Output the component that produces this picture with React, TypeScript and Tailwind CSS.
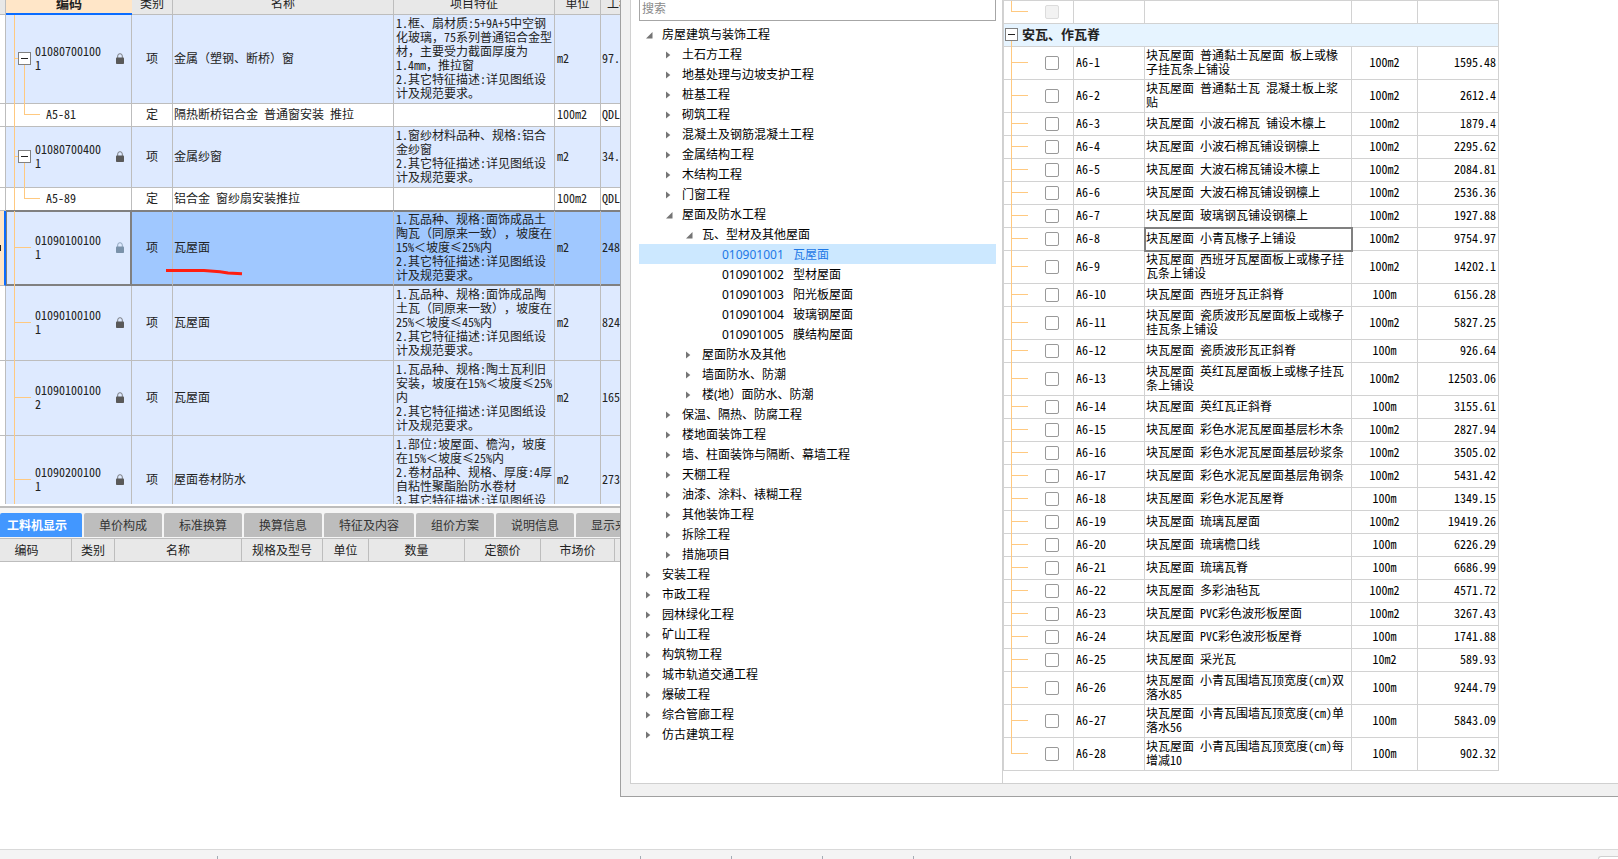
import { Fragment } from 'react';
import clsx from 'clsx';

type Bill = {
  code: string;
  kind: '项' | '定';
  name: string;
  spec: string;
  unit: string;
  qty: string;
  height: string;
  expandable?: boolean;
  selected?: boolean;
};

const bills: Bill[] = [
  {
    code: '01080700100\n1', kind: '项', name: '金属（塑钢、断桥）窗', unit: 'm2', qty: '97.', height: 'h-[89px]', expandable: true,
    spec: '1.框、扇材质:5+9A+5中空钢\n化玻璃，75系列普通铝合金型\n材，主要受力截面厚度为\n1.4mm，推拉窗\n2.其它特征描述:详见图纸设\n计及规范要求。',
  },
  { code: 'A5-81', kind: '定', name: '隔热断桥铝合金 普通窗安装 推拉', spec: '', unit: '100m2', qty: 'QDL', height: 'h-[23px]' },
  {
    code: '01080700400\n1', kind: '项', name: '金属纱窗', unit: 'm2', qty: '34.', height: 'h-[61px]', expandable: true,
    spec: '1.窗纱材料品种、规格:铝合\n金纱窗\n2.其它特征描述:详见图纸设\n计及规范要求。',
  },
  { code: 'A5-89', kind: '定', name: '铝合金 窗纱扇安装推拉', spec: '', unit: '100m2', qty: 'QDL', height: 'h-[23px]' },
  {
    code: '01090100100\n1', kind: '项', name: '瓦屋面', unit: 'm2', qty: '248', height: 'h-[75px]', selected: true,
    spec: '1.瓦品种、规格:面饰成品土\n陶瓦（同原来一致），坡度在\n15%＜坡度≤25%内\n2.其它特征描述:详见图纸设\n计及规范要求。',
  },
  {
    code: '01090100100\n1', kind: '项', name: '瓦屋面', unit: 'm2', qty: '824', height: 'h-[75px]',
    spec: '1.瓦品种、规格:面饰成品陶\n土瓦（同原来一致），坡度在\n25%＜坡度≤45%内\n2.其它特征描述:详见图纸设\n计及规范要求。',
  },
  {
    code: '01090100100\n2', kind: '项', name: '瓦屋面', unit: 'm2', qty: '165', height: 'h-[75px]',
    spec: '1.瓦品种、规格:陶土瓦利旧\n安装，坡度在15%＜坡度≤25%\n内\n2.其它特征描述:详见图纸设\n计及规范要求。',
  },
  {
    code: '01090200100\n1', kind: '项', name: '屋面卷材防水', unit: 'm2', qty: '273', height: 'h-[89px]',
    spec: '1.部位:坡屋面、檐沟，坡度\n在15%＜坡度≤25%内\n2.卷材品种、规格、厚度:4厚\n自粘性聚酯胎防水卷材\n3.其它特征描述:详见图纸设\n计及规范要求。',
  },
];

const tabs = ['工料机显示', '单价构成', '标准换算', '换算信息', '特征及内容', '组价方案', '说明信息', '显示来源'];

const detailColumns = [
  { label: '编码', width: 'w-[72px] pr-[18px]' },
  { label: '类别', width: 'w-[43px]' },
  { label: '名称', width: 'w-[127px]' },
  { label: '规格及型号', width: 'w-[81px]' },
  { label: '单位', width: 'w-[46px]' },
  { label: '数量', width: 'w-[96px]' },
  { label: '定额价', width: 'w-[76px]' },
  { label: '市场价', width: 'w-[74px]' },
  { label: '', width: 'w-[60px]' },
];

type Node = { level: number; label: string; code?: string; open?: boolean; active?: boolean };

const tree: Node[] = [
  { level: 0, label: '房屋建筑与装饰工程', open: true },
  { level: 1, label: '土石方工程' },
  { level: 1, label: '地基处理与边坡支护工程' },
  { level: 1, label: '桩基工程' },
  { level: 1, label: '砌筑工程' },
  { level: 1, label: '混凝土及钢筋混凝土工程' },
  { level: 1, label: '金属结构工程' },
  { level: 1, label: '木结构工程' },
  { level: 1, label: '门窗工程' },
  { level: 1, label: '屋面及防水工程', open: true },
  { level: 2, label: '瓦、型材及其他屋面', open: true },
  { level: 3, code: '010901001', label: '瓦屋面', active: true },
  { level: 3, code: '010901002', label: '型材屋面' },
  { level: 3, code: '010901003', label: '阳光板屋面' },
  { level: 3, code: '010901004', label: '玻璃钢屋面' },
  { level: 3, code: '010901005', label: '膜结构屋面' },
  { level: 2, label: '屋面防水及其他' },
  { level: 2, label: '墙面防水、防潮' },
  { level: 2, label: '楼(地）面防水、防潮' },
  { level: 1, label: '保温、隔热、防腐工程' },
  { level: 1, label: '楼地面装饰工程' },
  { level: 1, label: '墙、柱面装饰与隔断、幕墙工程' },
  { level: 1, label: '天棚工程' },
  { level: 1, label: '油漆、涂料、裱糊工程' },
  { level: 1, label: '其他装饰工程' },
  { level: 1, label: '拆除工程' },
  { level: 1, label: '措施项目' },
  { level: 0, label: '安装工程' },
  { level: 0, label: '市政工程' },
  { level: 0, label: '园林绿化工程' },
  { level: 0, label: '矿山工程' },
  { level: 0, label: '构筑物工程' },
  { level: 0, label: '城市轨道交通工程' },
  { level: 0, label: '爆破工程' },
  { level: 0, label: '综合管廊工程' },
  { level: 0, label: '仿古建筑工程' },
];

const indent = ['pl-[7px]', 'pl-[27px]', 'pl-[47px]', 'pl-[67px]'];

const quotas = [
  ['A6-1', '块瓦屋面 普通黏土瓦屋面 板上或椽\n子挂瓦条上铺设', '100m2', '1595.48'],
  ['A6-2', '块瓦屋面 普通黏土瓦 混凝土板上浆\n贴', '100m2', '2612.4'],
  ['A6-3', '块瓦屋面 小波石棉瓦 铺设木檩上', '100m2', '1879.4'],
  ['A6-4', '块瓦屋面 小波石棉瓦铺设钢檩上', '100m2', '2295.62'],
  ['A6-5', '块瓦屋面 大波石棉瓦铺设木檩上', '100m2', '2084.81'],
  ['A6-6', '块瓦屋面 大波石棉瓦铺设钢檩上', '100m2', '2536.36'],
  ['A6-7', '块瓦屋面 玻璃钢瓦铺设钢檩上', '100m2', '1927.88'],
  ['A6-8', '块瓦屋面 小青瓦椽子上铺设', '100m2', '9754.97'],
  ['A6-9', '块瓦屋面 西班牙瓦屋面板上或椽子挂\n瓦条上铺设', '100m2', '14202.1'],
  ['A6-10', '块瓦屋面 西班牙瓦正斜脊', '100m', '6156.28'],
  ['A6-11', '块瓦屋面 瓷质波形瓦屋面板上或椽子\n挂瓦条上铺设', '100m2', '5827.25'],
  ['A6-12', '块瓦屋面 瓷质波形瓦正斜脊', '100m', '926.64'],
  ['A6-13', '块瓦屋面 英红瓦屋面板上或椽子挂瓦\n条上铺设', '100m2', '12503.06'],
  ['A6-14', '块瓦屋面 英红瓦正斜脊', '100m', '3155.61'],
  ['A6-15', '块瓦屋面 彩色水泥瓦屋面基层杉木条', '100m2', '2827.94'],
  ['A6-16', '块瓦屋面 彩色水泥瓦屋面基层砂浆条', '100m2', '3505.02'],
  ['A6-17', '块瓦屋面 彩色水泥瓦屋面基层角钢条', '100m2', '5431.42'],
  ['A6-18', '块瓦屋面 彩色水泥瓦屋脊', '100m', '1349.15'],
  ['A6-19', '块瓦屋面 琉璃瓦屋面', '100m2', '19419.26'],
  ['A6-20', '块瓦屋面 琉璃檐口线', '100m', '6226.29'],
  ['A6-21', '块瓦屋面 琉璃瓦脊', '100m', '6686.99'],
  ['A6-22', '块瓦屋面 多彩油毡瓦', '100m2', '4571.72'],
  ['A6-23', '块瓦屋面 PVC彩色波形板屋面', '100m2', '3267.43'],
  ['A6-24', '块瓦屋面 PVC彩色波形板屋脊', '100m', '1741.88'],
  ['A6-25', '块瓦屋面 采光瓦', '10m2', '589.93'],
  ['A6-26', '块瓦屋面 小青瓦围墙瓦顶宽度(cm)双\n落水85', '100m', '9244.79'],
  ['A6-27', '块瓦屋面 小青瓦围墙瓦顶宽度(cm)单\n落水56', '100m', '5843.09'],
  ['A6-28', '块瓦屋面 小青瓦围墙瓦顶宽度(cm)每\n增减10', '100m', '902.32'],
];

// Half-width forms are on for the grids, so full-width punctuation has to opt out.
function GridText({ children }: { children: string }) {
  return children.split(/([，（）＜]+)/).map((part, idx) =>
    idx % 2 ? (
      <span key={idx} className="[font-feature-settings:normal]">{part}</span>
    ) : (
      <Fragment key={idx}>{part}</Fragment>
    ),
  );
}

function Lock({ className }: { className: string }) {
  return (
    <svg viewBox="0 0 8 11" className={clsx('h-[11px] w-2 shrink-0', className)} aria-hidden="true">
      <path d="M1.7 5V3a2.3 2.3 0 0 1 4.6 0v2" fill="none" stroke="currentColor" strokeWidth="1" opacity="0.75" />
      <rect x="0" y="4.6" width="8" height="6.4" rx="0.8" fill="currentColor" />
    </svg>
  );
}

function Collapse({ className }: { className?: string }) {
  return (
    <button type="button" aria-label="折叠" className={clsx('flex h-[13px] w-[13px] shrink-0 items-center justify-center border border-[#808080] bg-white', className)}>
      <span className="h-px w-[7px] bg-[#222]" />
    </button>
  );
}

function Arrow({ open }: { open?: boolean }) {
  return (
    <svg viewBox="0 0 16 8" className="h-2 w-4 shrink-0" fill="#757575" aria-hidden="true">
      {open ? <path d="M6.5 1v6.5H0z" /> : <path d="M0 0.5v7L4.3 4z" />}
    </svg>
  );
}

function BillRow({ bill }: { bill: Bill }) {
  const item = bill.kind === '项';
  const cell = clsx('border-b p-0 pb-0.5', bill.selected ? 'border-b-[#808080]' : 'border-b-[#bdbdbd]');
  const plain = clsx(cell, 'border-r border-r-[#bdbdbd]', bill.selected && 'shadow-[inset_0_1px_#808080,inset_0_-1px_#808080,0_-1px_#808080]');
  return (
    <tr className={clsx(bill.height, bill.selected ? 'bg-[#a0c8ff]' : item ? 'bg-[#deeaff]' : 'bg-white')}>
      <td className={clsx('border-b border-b-[#bdbdbd] p-0', bill.selected ? 'border-r-2 border-r-[#0a6cff] bg-[#ffe6c8]' : 'border-r border-r-[#bdbdbd] bg-white')}>
        {bill.selected && <span className="block h-1.5 w-px bg-[#222]" />}
      </td>
      <td
        className={clsx(
          cell,
          'relative',
          bill.selected
            ? 'border-r-2 border-r-[#808080] bg-[#deeaff] shadow-[inset_1px_1px_#808080,inset_0_-1px_#808080,0_-1px_#808080]'
            : 'border-r border-r-[#bdbdbd]',
        )}
      >
        <span className="absolute top-0 -bottom-px left-2 w-px bg-[#ffc980]" />
        {item && <span className={clsx('absolute top-1/2 left-2 -mt-px h-px bg-[#ffc980]', bill.expandable ? 'w-1' : 'w-[17px]')} />}
        {bill.expandable && <span className="absolute top-1/2 -bottom-px left-[18px] w-px bg-[#ffc980]" />}
        {!item && <span className="absolute top-0 bottom-1/2 left-[18px] w-4 border-b border-l border-[#ffc980]" />}
        {item ? (
          <div className={clsx('relative flex items-center pl-3', bill.selected ? 'pr-1.5' : 'pr-[7px]')}>
            {bill.expandable ? <Collapse /> : <span className="w-[13px]" />}
            <span className="ml-1 flex-1 whitespace-pre">{bill.code}</span>
            <Lock className={bill.selected ? 'text-[#7a92aa]' : 'text-[#595959]'} />
          </div>
        ) : (
          <div className="pl-10">{bill.code}</div>
        )}
      </td>
      <td className={clsx(plain, 'text-center')}>{bill.kind}</td>
      <td className={clsx(plain, 'pl-px whitespace-pre')}>
        <GridText>{bill.name}</GridText>
      </td>
      <td className={clsx(plain, 'pl-0.5 whitespace-pre')}>
        <GridText>{bill.spec}</GridText>
      </td>
      <td className={clsx(plain, 'pl-0.5')}>{bill.unit}</td>
      <td className={clsx(plain, 'pl-px')}>{bill.qty}</td>
    </tr>
  );
}

function BillGrid() {
  const head = 'border-r border-b border-[#bdbdbd] bg-[#e8e8e8] p-0 font-normal';
  return (
    <div className="relative h-[504px] shrink-0 overflow-hidden text-[#222]">
      <table className="-mt-2 w-[661px] table-fixed border-separate border-spacing-0 text-left">
        <colgroup>
          <col className="w-1.5" />
          <col className="w-[126px]" />
          <col className="w-[41px]" />
          <col className="w-[221px]" />
          <col className="w-[161px]" />
          <col className="w-[46px]" />
          <col className="w-[60px]" />
        </colgroup>
        <thead>
          <tr className="h-[23px] text-center">
            <th className={head} />
            <th className="border-b-2 border-[#0a6cff] bg-[#ffe6c8] p-0 text-[13px] font-bold">编码</th>
            <th className={head}>类别</th>
            <th className={head}>名称</th>
            <th className={head}>项目特征</th>
            <th className={head}>单位</th>
            <th className={clsx(head, 'pl-1.5 text-left')}>工程量</th>
          </tr>
        </thead>
        <tbody>
          {bills.map((bill, idx) => (
            <BillRow key={idx} bill={bill} />
          ))}
        </tbody>
      </table>
      {/* Pen mark under the selected item */}
      <svg viewBox="0 0 78 8" className="absolute top-[268px] left-[165px] z-20 h-2 w-[78px]" fill="none" stroke="#ff1e10" strokeWidth="3" aria-hidden="true">
        <path d="M1 2.5h38l16 1.2 8 1.2 14 0.8" />
      </svg>
    </div>
  );
}

function DetailPane() {
  return (
    <div className="mt-0.5 shrink-0 border-t-2 border-[#bdbdbd] bg-[#f5f5f5] pt-[5px]">
      <div role="tablist" className="flex gap-0.5 font-['Noto_Sans','Noto_Sans_CJK_SC',sans-serif]">
        {tabs.map((tab, idx) => (
          <button
            key={tab}
            type="button"
            role="tab"
            aria-selected={idx === 0}
            className={clsx('h-6 shrink-0 rounded-t-xs pt-0.5 pr-[15px]', idx === 0 ? 'bg-[#4297ff] pl-[7px] font-bold text-white' : 'bg-[#bdbdbd] pl-[15px] text-[#333]')}
          >
            {tab}
          </button>
        ))}
      </div>
      <table className="mt-px w-[675px] table-fixed border-separate border-spacing-0 border-t border-[#bdbdbd] bg-[#e8e8e8] text-[#222]">
        <thead>
          <tr className="h-[23px]">
            {detailColumns.map((col, idx) => (
              <th key={idx} className={clsx('border-r border-b border-[#bdbdbd] p-0 font-normal', col.width)}>
                {col.label}
              </th>
            ))}
          </tr>
        </thead>
      </table>
    </div>
  );
}

function ChapterTree() {
  return (
    <div className="w-[372px] shrink-0 border-r border-[#d0d0d0] pr-1.5 pl-2 font-['Noto_Sans','Noto_Sans_CJK_SC',sans-serif] text-black [font-feature-settings:normal]">
      <input
        type="text"
        aria-label="搜索"
        placeholder="搜索"
        className="-mt-1 block h-[25px] w-full border border-[#a6a6a6] bg-white px-0.5 placeholder:text-[#8a8a8a] focus:outline-none"
      />
      <ul role="tree" className="mt-[3px]">
        {tree.map((node, idx) => (
          <li
            key={idx}
            role="treeitem"
            aria-selected={!!node.active}
            className={clsx('flex h-5 items-center pt-0.5 whitespace-pre', indent[node.level], node.active && 'bg-[#cce8ff] text-[#1e78e6]')}
          >
            {node.code ? <span className="ml-4 w-[71px]">{node.code}</span> : <Arrow open={node.open} />}
            {node.label}
          </li>
        ))}
      </ul>
    </div>
  );
}

function QuotaTable() {
  const box = 'border-r border-b border-[#d2d2d2] p-0';
  const cell = clsx(box, 'pb-0.5');
  return (
    <table className="w-[496px] table-fixed border-separate border-spacing-0 self-start border-t border-l border-[#d2d2d2] text-black">
      <colgroup>
        <col className="w-[70px]" />
        <col className="w-[71px]" />
        <col className="w-[207px]" />
        <col className="w-[66px]" />
        <col className="w-[81px]" />
      </colgroup>
      <tbody>
        <tr className="h-[23px]">
          <td className={clsx(box, 'relative')}>
            <span className="absolute top-0 bottom-1/2 left-[7px] w-[17px] border-b border-l border-[#ffc980]" />
            <input type="checkbox" disabled aria-label="未选" className="ml-[41px] block h-3.5 w-3.5 appearance-none rounded-xs border border-[#dcdcdc] bg-[#f2f2f2]" />
          </td>
          <td className={cell} />
          <td className={cell} />
          <td className={cell} />
          <td className={cell} />
        </tr>
        <tr className="h-[23px] bg-[#e6f4ff]">
          <td colSpan={5} className={clsx(cell, 'relative')}>
            <span className="absolute top-1/2 -bottom-px left-[7px] w-px bg-[#ffc980]" />
            <div className="relative flex items-center">
              <Collapse className="ml-px" />
              <span className="ml-1 text-[13px] font-bold text-[#222]">安瓦、作瓦脊</span>
            </div>
          </td>
        </tr>
        {quotas.map(([code, name, unit, price], idx) => (
          <tr key={code} className={name.includes('\n') ? 'h-[33px]' : 'h-[23px]'}>
            <td className={clsx(box, 'relative')}>
              {idx < quotas.length - 1 ? (
                <Fragment>
                  <span className="absolute top-0 -bottom-px left-[7px] w-px bg-[#ffc980]" />
                  <span className="absolute top-1/2 left-[7px] -mt-px h-px w-[17px] bg-[#ffc980]" />
                </Fragment>
              ) : (
                <span className="absolute top-0 bottom-1/2 left-[7px] w-[17px] border-b border-l border-[#ffc980]" />
              )}
              <input type="checkbox" aria-label={code} className="ml-[41px] block h-3.5 w-3.5 appearance-none rounded-xs border border-[#999] bg-white checked:bg-[#4297ff]" />
            </td>
            <td className={clsx(cell, 'pl-0.5')}>{code}</td>
            <td className={clsx(cell, 'pl-px whitespace-pre', code === 'A6-8' && 'relative outline-2 -outline-offset-1 outline-[#808080]')}>{name}</td>
            <td className={clsx(cell, 'text-center')}>{unit}</td>
            <td className={clsx(cell, 'pr-0.5 text-right')}>{price}</td>
          </tr>
        ))}
      </tbody>
    </table>
  );
}

export default function App() {
  return (
    <div className="flex h-screen flex-col overflow-hidden bg-white font-['Noto_Sans_CJK_SC',sans-serif] text-xs leading-[14px] [font-feature-settings:'hwid'] [text-spacing-trim:space-all]">
      <main className="relative flex min-h-0 flex-1 flex-col overflow-hidden">
        <BillGrid />
        <DetailPane />

        {/* Quota picker window */}
        <section aria-label="查询" className="absolute top-0 right-0 left-[620px] z-30 border-b border-l border-[#a0a0a0] bg-[#f1f1f1] pb-3 pl-[9px]">
          <div className="flex h-[784px] overflow-hidden border-b border-l border-[#d0d0d0] bg-white">
            <ChapterTree />
            <QuotaTable />
          </div>
        </section>
      </main>

      <footer className="flex h-2.5 shrink-0 border-t border-[#d9d9d9] bg-[#f4f4f4] pt-1.5">
        <span className="w-[218px] border-r border-[#a3acb5]" />
        <span className="w-[423px] border-r border-[#a3acb5]" />
        <span className="w-[91px] border-r border-[#a3acb5]" />
        <span className="w-[91px] border-r border-[#a3acb5]" />
        <span className="w-[91px] border-r border-[#a3acb5]" />
        <span className="w-[157px] border-r border-[#a3acb5]" />
        <span className="ml-auto w-5 rounded-tl-sm border-t border-l border-[#d0d0d0] bg-white" />
      </footer>
    </div>
  );
}
